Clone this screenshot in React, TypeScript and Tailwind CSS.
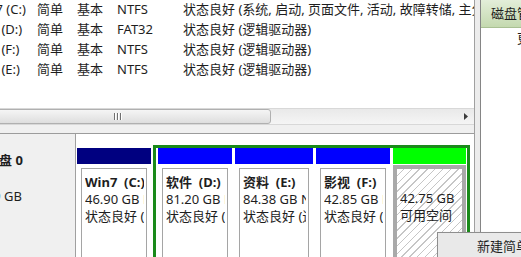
type Part = {
  name?: string;
  size: string;
  extra: string;
  width: string;
  bar: string;
  free?: boolean;
};

const volumes = [
  { vol: "Win7 (C:)", fs: "NTFS", status: "状态良好 (系统, 启动, 页面文件, 活动, 故障转储, 主分区)" },
  { vol: "软件 (D:)", fs: "FAT32", status: "状态良好 (逻辑驱动器)" },
  { vol: "影视 (F:)", fs: "NTFS", status: "状态良好 (逻辑驱动器)" },
  { vol: "资料 (E:)", fs: "NTFS", status: "状态良好 (逻辑驱动器)" },
];

const logical: Part[] = [
  { name: "软件  (D:)", size: "81.20 GB FAT32", extra: "状态良好 (逻辑驱动器)", width: "w-[74px]", bar: "bg-[#0000ff]" },
  { name: "资料  (E:)", size: "84.38 GB NTFS", extra: "状态良好 (逻辑驱动器)", width: "w-[78px]", bar: "bg-[#0000ff]" },
  { name: "影视  (F:)", size: "42.85 GB NTFS", extra: "状态良好 (逻辑驱动器)", width: "w-[74px]", bar: "bg-[#0000ff]" },
  { size: "42.75 GB", extra: "可用空间", width: "w-[73px]", bar: "bg-[#00ff00]", free: true },
];

function VolumeList() {
  return (
    <div className="h-[108px] shrink-0 overflow-hidden bg-white">
      {volumes.map((v) => (
        <div key={v.vol} className="flex h-[20px] items-center whitespace-nowrap">
          <div className="ml-[-28px] w-[65px] shrink-0">{v.vol}</div>
          <div className="w-[40px] shrink-0">简单</div>
          <div className="w-[40px] shrink-0">基本</div>
          <div className="w-[66px] shrink-0">{v.fs}</div>
          <div className="min-w-0 flex-1 overflow-hidden">{v.status}</div>
        </div>
      ))}
    </div>
  );
}

function ScrollBar() {
  return (
    <div className="flex h-[17px] shrink-0 border-y border-[#d8d8d8] bg-gradient-to-b from-[#e9e9e9] to-[#f5f5f5]">
      <div className="ml-[-4px] flex w-[275px] shrink-0 items-center rounded-[3px] border border-[#b0b0b0] bg-gradient-to-b from-[#f5f5f5] to-[#dedede] pl-[117px]">
        <div className="flex gap-[2px]">
          <div className="h-[7px] w-[1px] bg-[#707070] shadow-[1px_0_0_#ffffff]" />
          <div className="h-[7px] w-[1px] bg-[#707070] shadow-[1px_0_0_#ffffff]" />
          <div className="h-[7px] w-[1px] bg-[#707070] shadow-[1px_0_0_#ffffff]" />
        </div>
      </div>
      <div className="flex-1" />
      <div className="flex w-[17px] shrink-0 items-center justify-center">
        <svg width="4" height="7" viewBox="0 0 4 7">
          <path d="M0 0 L4 3.5 L0 7 Z" fill="#3c3c3c" />
        </svg>
      </div>
    </div>
  );
}

function Partition({ p }: { p: Part }) {
  return (
    <div className={`flex shrink-0 flex-col ${p.width}`}>
      <div className={`h-[16px] ${p.bar}`} />
      {p.free ? (
        <div className="mt-[1px] h-[120px] whitespace-nowrap border-[4px] border-[#a9a9a9] bg-[repeating-linear-gradient(135deg,#ffffff_0px,#ffffff_4.5px,#c6c6c6_4.5px,#c6c6c6_5.5px)] px-[3px] pt-[4px] leading-[17px]">
          <div className="overflow-hidden">
            <div>&nbsp;</div>
            <div>{p.size}</div>
            <div>{p.extra}</div>
          </div>
        </div>
      ) : (
        <div className="mx-[4px] mt-[4px] h-[120px] whitespace-pre border border-[#a5a5a5] bg-white pl-[3px] pr-[2px] pt-[5px] leading-[17px]">
          <div className="overflow-hidden">
            <div className="font-bold">{p.name}</div>
            <div>{p.size}</div>
            <div>{p.extra}</div>
          </div>
        </div>
      )}
    </div>
  );
}

function DiskRow() {
  return (
    <div className="flex min-h-0 flex-1 overflow-hidden">
      <div className="w-[76px] shrink-0 overflow-hidden border-r border-[#a0a0a0] bg-[#f0f0f0]">
        <div className="ml-[-40px] whitespace-nowrap pt-[17px] leading-[18px]">
          <div className="pl-[26px] font-bold">磁盘 0</div>
          <div>基本</div>
          <div>298.09 GB</div>
          <div>联机</div>
        </div>
      </div>
      <div className="flex flex-1 items-start bg-white pl-[1px]">
        <div className="mt-[14px]">
          <Partition
            p={{
              name: "Win7  (C:)",
              size: "46.90 GB NTFS",
              extra: "状态良好 (系统, 启动, 页面文件)",
              width: "w-[74px]",
              bar: "bg-[#000080]",
            }}
          />
        </div>
        <div className="ml-[2px] mt-[11px] flex h-[200px] gap-[3px] border-[3px] border-[#1a8a1a] pl-[2px] pr-[1px]">
          {logical.map((p) => (
            <Partition key={p.size} p={p} />
          ))}
        </div>
      </div>
    </div>
  );
}

function ActionPane() {
  return (
    <div className="flex w-[40px] shrink-0 flex-col overflow-hidden bg-white">
      <div className="h-[28px] shrink-0 whitespace-nowrap border-b border-[#a9c093] bg-gradient-to-b from-[#e3eed9] to-[#c4d9af] pl-[10px] leading-[27px]">
        磁盘管理
      </div>
      <div className="whitespace-nowrap pl-[36px] pt-[1px] leading-[18px]">更多操作</div>
    </div>
  );
}

export default function App() {
  return (
    <div className="relative flex h-[257px] w-[521px] overflow-hidden bg-white font-['Noto_Sans','Noto_Sans_CJK_SC',sans-serif] text-[13px] text-[#1e1e1e]">
      <div className="flex w-[474px] shrink-0 flex-col">
        <VolumeList />
        <ScrollBar />
        <div className="h-[9px] shrink-0 border-b border-[#9c9c9c] bg-[#f0f0f0]" />
        <DiskRow />
      </div>
      <div className="w-[7px] shrink-0 border-x border-l-[#a0a0a0] border-r-[#858585] bg-[#ececec]" />
      <ActionPane />

      {/* context menu */}
      <div className="absolute left-[437px] top-[232px] h-[40px] w-[110px] whitespace-nowrap border border-[#8e8e8e] bg-[#e9e9e9] pl-[39px] pt-[4px] leading-[18px] shadow-[2px_2px_3px_rgba(0,0,0,0.35)]">
        新建简单卷(I)...
      </div>
    </div>
  );
}
